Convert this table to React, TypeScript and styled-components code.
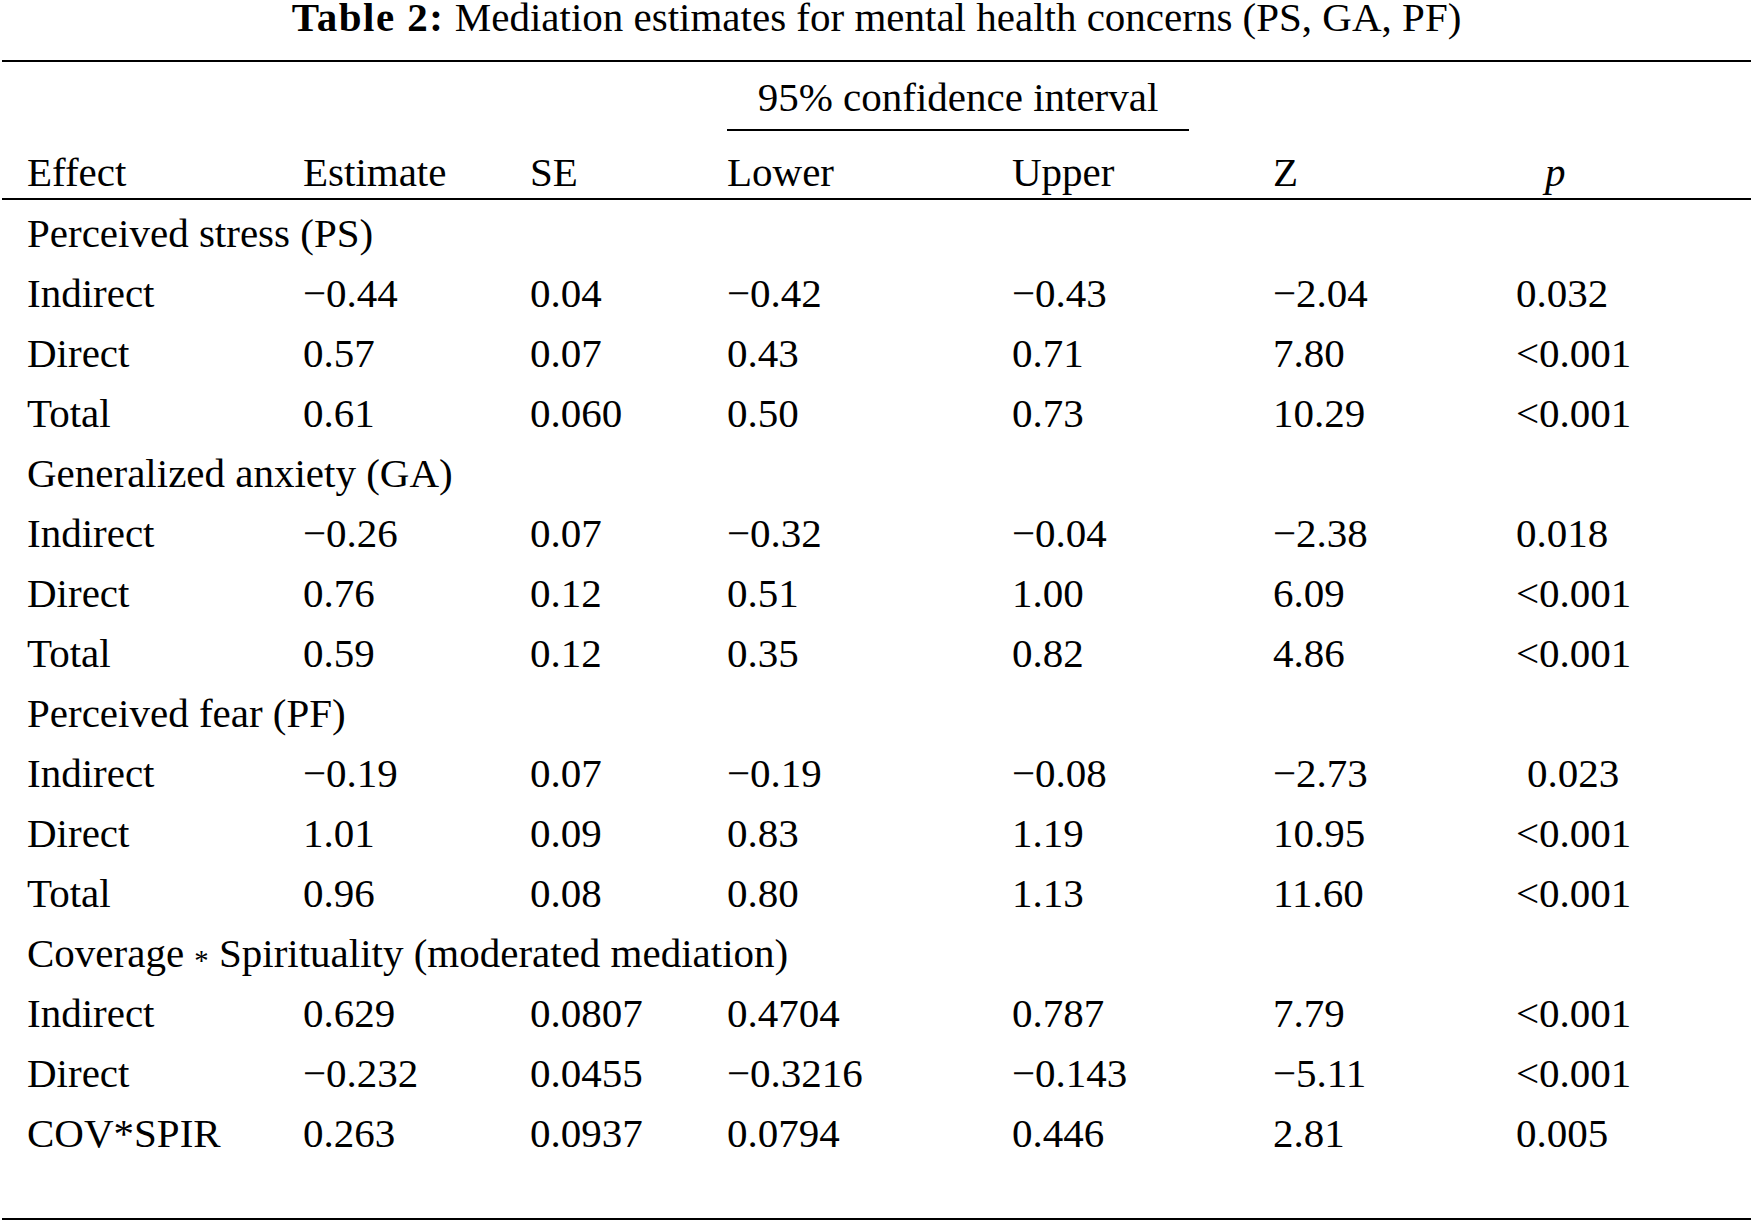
import React from "react";
import styled, { createGlobalStyle } from "styled-components";

const GlobalStyle = createGlobalStyle`
  html,
  body {
    margin: 0;
    padding: 0;
    background: #fff;
  }

  body {
    font-family: "Liberation Serif", "Times New Roman", serif;
    color: #000;
  }
`;

const COLUMNS = "276px 227px 197px 285px 261px 243px 1fr";

const Page = styled.div`
  width: 1753px;
  height: 1224px;
  overflow: hidden;
  font-size: 41px;
`;

const Caption = styled.div`
  height: 60px;
  line-height: 34px;
  text-align: center;
  white-space: nowrap;
`;

const CaptionLabel = styled.b`
  font-weight: 700;
  letter-spacing: 1.5px;
`;

const Table = styled.div`
  margin: 0 2px;
  border-top: 2px solid #000;
  border-bottom: 2px solid #000;
  padding-bottom: 55px;
`;

const Head = styled.div`
  border-bottom: 2px solid #000;
`;

const Row = styled.div<{ $height?: number; $lineHeight?: number }>`
  display: grid;
  grid-template-columns: ${COLUMNS};
  padding-left: 25px;
  height: ${(p) => (p.$height ? `${p.$height}px` : "60px")};
  line-height: ${(p) => (p.$lineHeight ? `${p.$lineHeight}px` : "60px")};
  align-items: end;
  white-space: nowrap;
`;

const SpanGroup = styled.div`
  grid-column: 4 / span 2;
  align-self: stretch;
  box-sizing: border-box;
  width: 462px;
  padding-top: 15px;
  line-height: 40px;
  border-bottom: 2px solid #000;
  text-align: center;
`;

const Cell = styled.div<{ $indent?: number; $italic?: boolean }>`
  padding-left: ${(p) => p.$indent ?? 0}px;
  font-style: ${(p) => (p.$italic ? "italic" : "normal")};
`;

const GroupTitle = styled.div`
  grid-column: 1 / -1;
`;

const LowStar = styled.span`
  display: inline-block;
  font-size: 0.7em;
  vertical-align: -0.11em;
`;

const Body = styled.div`
  padding-top: 3px;
`;

type DataRow = string[];

type Group = {
  title: React.ReactNode;
  rows: DataRow[];
};

const groups: Group[] = [
  {
    title: "Perceived stress (PS)",
    rows: [
      ["Indirect", "−0.44", "0.04", "−0.42", "−0.43", "−2.04", "0.032"],
      ["Direct", "0.57", "0.07", "0.43", "0.71", "7.80", "<0.001"],
      ["Total", "0.61", "0.060", "0.50", "0.73", "10.29", "<0.001"],
    ],
  },
  {
    title: "Generalized anxiety (GA)",
    rows: [
      ["Indirect", "−0.26", "0.07", "−0.32", "−0.04", "−2.38", "0.018"],
      ["Direct", "0.76", "0.12", "0.51", "1.00", "6.09", "<0.001"],
      ["Total", "0.59", "0.12", "0.35", "0.82", "4.86", "<0.001"],
    ],
  },
  {
    title: "Perceived fear (PF)",
    rows: [
      ["Indirect", "−0.19", "0.07", "−0.19", "−0.08", "−2.73", " 0.023"],
      ["Direct", "1.01", "0.09", "0.83", "1.19", "10.95", "<0.001"],
      ["Total", "0.96", "0.08", "0.80", "1.13", "11.60", "<0.001"],
    ],
  },
  {
    title: (
      <>
        Coverage <LowStar>*</LowStar> Spirituality (moderated mediation)
      </>
    ),
    rows: [
      ["Indirect", "0.629", "0.0807", "0.4704", "0.787", "7.79", "<0.001"],
      ["Direct", "−0.232", "0.0455", "−0.3216", "−0.143", "−5.11", "<0.001"],
      ["COV*SPIR", "0.263", "0.0937", "0.0794", "0.446", "2.81", "0.005"],
    ],
  },
];

export default function App() {
  return (
    <Page>
      <GlobalStyle />
      <Caption>
        <CaptionLabel>Table 2:</CaptionLabel> Mediation estimates for mental
        health concerns (PS, GA, PF)
      </Caption>
      <Table>
        <Head>
          <Row $height={69} $lineHeight={40}>
            <SpanGroup>95% confidence interval</SpanGroup>
          </Row>
          <Row $height={67} $lineHeight={52}>
            <Cell>Effect</Cell>
            <Cell>Estimate</Cell>
            <Cell>SE</Cell>
            <Cell>Lower</Cell>
            <Cell>Upper</Cell>
            <Cell>Z</Cell>
            <Cell $indent={29} $italic>
              p
            </Cell>
          </Row>
        </Head>
        <Body>
          {groups.map((g, gi) => (
            <React.Fragment key={gi}>
              <Row>
                <GroupTitle>{g.title}</GroupTitle>
              </Row>
              {g.rows.map((r, ri) => (
                <Row key={ri}>
                  {r.map((v, ci) => (
                    <Cell key={ci} $indent={v.startsWith(" ") ? 11 : 0}>
                      {v.trim()}
                    </Cell>
                  ))}
                </Row>
              ))}
            </React.Fragment>
          ))}
        </Body>
      </Table>
    </Page>
  );
}
